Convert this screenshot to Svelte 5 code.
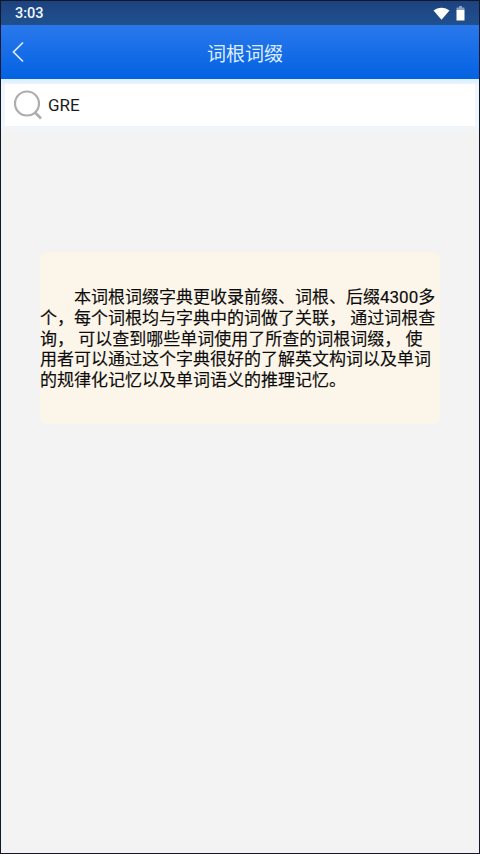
<script>
  const text = '本词根词缀字典更收录前缀、词根、后缀4300多个，每个词根均与字典中的词做了关联， 通过词根查询， 可以查到哪些单词使用了所查的词根词缀， 使用者可以通过这个字典很好的了解英文构词以及单词的规律化记忆以及单词语义的推理记忆。';
</script>

<div class="page">
  <div class="status">
    <span class="time">3:03</span>
    <div class="status-icons">
      <svg width="17" height="13" viewBox="0 0 17 13"><path d="M0.5 3.6C2.6 1.8 5.4 0.7 8.5 0.7s5.900 1.100 8 2.900L8.500 12.800z" fill="#fff"/></svg>
      <svg width="9" height="15" viewBox="0 0 9 15"><rect x="3" y="0" width="3" height="2" fill="#8aa0c0"/><rect x="0.500" y="1.500" width="8" height="3" rx="0.500" fill="#8aa0c0"/><rect x="0.500" y="4" width="8" height="10.500" rx="0.500" fill="#fff"/></svg>
    </div>
  </div>
  <header class="bar">
    <svg class="back" width="14" height="22" viewBox="0 0 14 22"><path d="M12 1.500 2.500 11 12 20.500" fill="none" stroke="#dbe9ff" stroke-width="1.700"/></svg>
    <h1>词根词缀</h1>
  </header>
  <div class="search">
    <div class="field">
      <svg width="30" height="30" viewBox="0 0 30 30"><circle cx="14" cy="13.500" r="12" fill="none" stroke="#adadad" stroke-width="2.200"/><path d="M22 22.500 28 28.500" fill="none" stroke="#adadad" stroke-width="2.600"/></svg>
      <span>GRE</span>
    </div>
  </div>
  <main>
    <section class="card"><p>{text}</p></section>
  </main>
</div>

<style>
  :global(body) { margin: 0; background: #f3f3f3; }
  .page { width: 480px; height: 854px; box-sizing: border-box; display: flex; flex-direction: column; background: #f3f3f3; border: 1px solid #10182a; font-family: Roboto, "Noto Sans CJK SC", sans-serif; overflow: hidden; }
  .status { height: 24px; flex: none; box-sizing: border-box; padding: 0 14px; display: flex; align-items: center; justify-content: space-between; background: linear-gradient(#1c437f, #20508f); color: #f2f6fb; }
  .time { font-size: 14.5px; font-weight: 500; }
  .status-icons { display: flex; align-items: center; gap: 6px; }
  .bar { position: relative; height: 54px; flex: none; display: flex; align-items: center; justify-content: center; padding-left: 10px; background: linear-gradient(#2a78ec, #0362e2); }
  .back { position: absolute; left: 10px; top: 16px; }
  h1 { margin: 0; font-size: 19px; font-weight: 400; color: #dfeeff; }
  .search { height: 53px; flex: none; box-sizing: border-box; padding: 5px 4px 6px; background: linear-gradient(#d9effe 0, #f0f7fd 14%, #f0f7fd 88%, #f3f3f3 100%); }
  .field { height: 42px; display: flex; align-items: center; gap: 4px; padding-left: 8px; background: #fff; box-shadow: 0 0 3px rgba(238, 246, 253, 0.9); }
  .field span { font-size: 17px; color: #1c1c1c; margin-left: 1px; }
  main { flex: 1; padding: 120px 39px 0; }
  .card { width: 400px; height: 172px; box-sizing: border-box; padding: 35px 2px 0 0; background: #fcf5e9; border-radius: 8px; }
  p { margin: 0; font-size: 17px; line-height: 20.8px; color: #0c0c0c; text-indent: 34px; word-break: break-all; -webkit-text-stroke: 0.15px #0c0c0c; }
</style>
